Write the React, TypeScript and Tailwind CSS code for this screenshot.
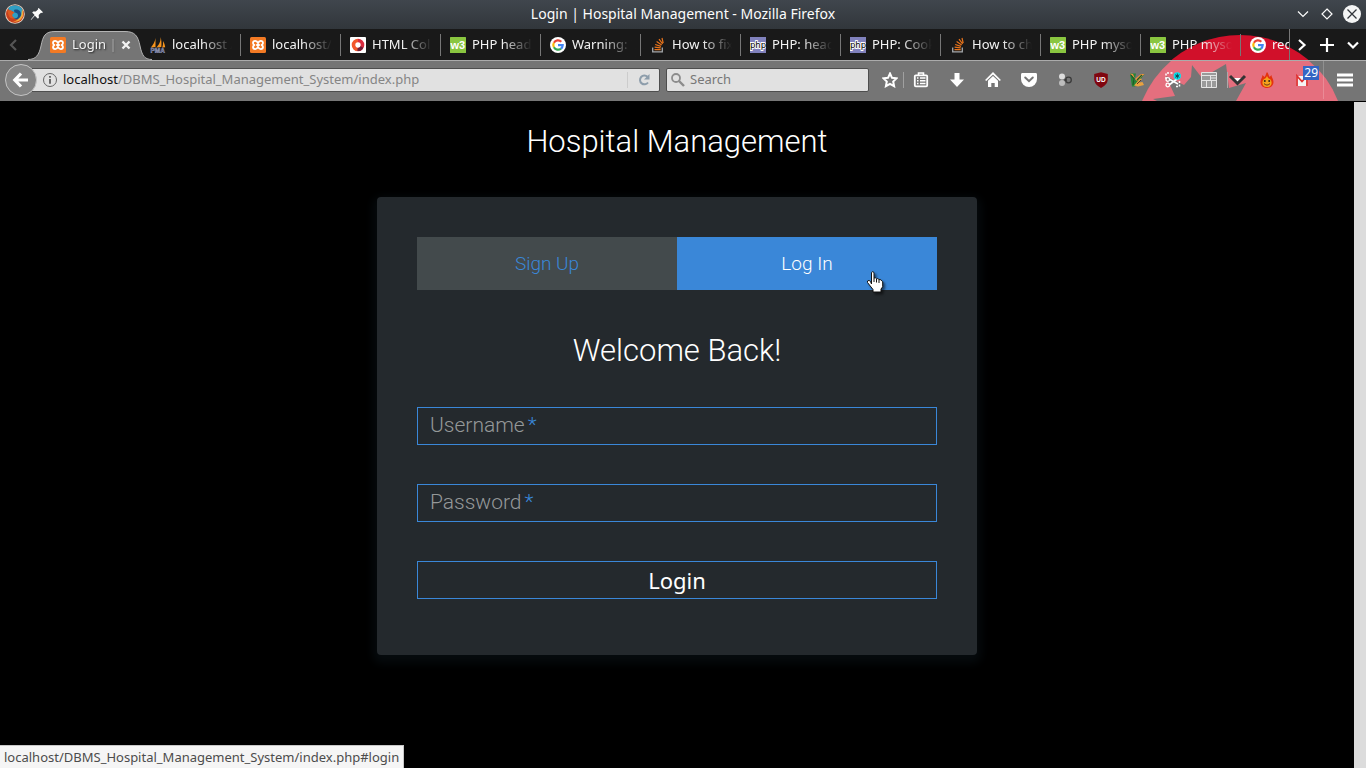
import { useState } from "react";
import type { ReactNode } from "react";

const icon16 = "block h-4 w-4 shrink-0";

function XamppIcon() {
  return (
    <svg className={icon16} viewBox="0 0 16 16" aria-hidden="true">
      <rect width="16" height="16" rx="1.5" fill="#f37a24" />
      <path
        d="M8 6.2C7.400 4.600 6.600 3.900 5.300 3.900 3.900 3.900 3 4.700 3 5.900 3 7 3.700 7.500 4.400 8 3.700 8.500 3 9 3 10.100c0 1.200.9 2 2.300 2 1.300 0 2.100-.7 2.700-2.300.6 1.600 1.400 2.300 2.700 2.300 1.400 0 2.300-.8 2.300-2 0-1.100-.7-1.600-1.400-2.100.7-.5 1.400-1 1.400-2.100 0-1.200-.9-2-2.300-2C9.400 3.900 8.600 4.600 8 6.200zM6.200 8h3.600"
        fill="none"
        stroke="#fff"
        strokeWidth="1.8"
        strokeLinejoin="round"
      />
    </svg>
  );
}

function PmaIcon() {
  return (
    <svg className={icon16} viewBox="0 0 16 16" aria-hidden="true">
      <path d="M5.500 1C5 5 3 8 .8 10.500L5.500 10zM10.500 0C11 4 9 8 6.300 10.500l5-.5c.4-4 .2-7-.8-10zM13 4c.2 2.500 0 4.500-.8 6.500l3-.2C15 8 14.200 6 13 4z" fill="#f7941d" />
      <text x="0.500" y="15.600" fontSize="6.500" fontWeight="700" fontFamily="Liberation Sans, sans-serif" fill="#3c4467" stroke="#aab0d0" strokeWidth=".4">PMA</text>
    </svg>
  );
}

function HtmlColorIcon() {
  return (
    <svg className={icon16} viewBox="0 0 16 16" aria-hidden="true">
      <rect width="16" height="16" rx="1" fill="#fff" />
      <path d="M8 3.500A4.500 4.500 0 0 0 8 12.500" fill="none" stroke="#f2572d" strokeWidth="3.600" />
      <path d="M8 3.500A4.500 4.500 0 0 1 8 12.500" fill="none" stroke="#d92b3f" strokeWidth="3.600" />
      <path d="M12 10A4.500 4.500 0 0 1 7.500 12.500" fill="none" stroke="#6d2039" strokeWidth="3" />
    </svg>
  );
}

function W3Icon() {
  return (
    <svg className={icon16} viewBox="0 0 16 16" aria-hidden="true">
      <rect width="16" height="16" rx=".5" fill="#8ac640" />
      <text x="0.500" y="12" fontSize="11" fontWeight="700" fontFamily="Liberation Sans, sans-serif" fill="#fff">w3</text>
    </svg>
  );
}

function GoogleIcon() {
  return (
    <svg className={icon16} viewBox="0 0 16 16" aria-hidden="true">
      <circle cx="8" cy="8" r="8" fill="#fff" />
      <g fill="none" strokeWidth="2.200">
        <path d="M11.300 4.700A4.700 4.700 0 0 0 3.900 5.700" stroke="#ea4335" />
        <path d="M3.900 5.700A4.700 4.700 0 0 0 3.900 10.300" stroke="#fbbc05" />
        <path d="M3.900 10.300A4.700 4.700 0 0 0 11 11.600" stroke="#34a853" />
        <path d="M11 11.600A4.700 4.700 0 0 0 12.700 8.200H8" stroke="#4285f4" />
      </g>
    </svg>
  );
}

function StackIcon() {
  return (
    <svg className={icon16} viewBox="0 0 16 16" aria-hidden="true">
      <path d="M2.700 10.500v4.300h9.600v-4.300" fill="none" stroke="#a5a8ab" strokeWidth="1.300" />
      <path d="M4.500 12.700h6.200M4.600 10.200l6.100.7M5.200 7.500l5.800 1.900M6.600 4.600l5.100 3.300M9 2.200l3.600 4.700M12 1l1.200 5.200" fill="none" stroke="#e8731b" strokeWidth="1.200" />
    </svg>
  );
}

function PhpIcon() {
  return (
    <svg className={icon16} viewBox="0 0 16 16" aria-hidden="true">
      <rect width="16" height="16" fill="#8182bd" />
      <text x="8" y="10.500" textAnchor="middle" fontSize="8.500" fontFamily="DejaVu Sans, sans-serif" fill="#000" stroke="#fff" strokeWidth="1.800" paintOrder="stroke">php</text>
    </svg>
  );
}

function FirefoxIcon() {
  return (
    <svg className="block h-5 w-5" viewBox="0 0 20 20" aria-hidden="true">
      <circle cx="10" cy="10" r="9.800" fill="#e9d6c4" />
      <circle cx="10" cy="10" r="9" fill="#c8401c" />
      <path d="M3 4.500C6 .6 13 .2 16.500 4c2.500 3 2.200 8-1 10.500C12 16 8 15 7 12 6.500 10 8 9 9.500 8.500L7 7 5 7z" fill="#2f9fc4" />
      <path d="M9 6c4-1.500 7.500 1 7 5s-4.500 5-7.500 3.500c3 .3 4.500-1 4.500-3C13 9 11 9 9.500 8.500z" fill="#1b4f83" />
      <path d="M17 5c1.800 3.500 1.800 7-.4 9.600-2 2.600-5.600 3.800-8.600 3 4-.6 7.500-3.600 8.500-7z" fill="#f5a93a" />
      <path d="M2 6l2 .5L6 6l1 1.500L9.500 8.500 7.500 10c-.8 2 .2 3.500 2.500 4-3 1.500-6-.5-6.500-3z" fill="#dd5a20" />
    </svg>
  );
}

function Chevron({ dir, color }: { dir: "left" | "right" | "down"; color: string }) {
  const d = { left: "M10 3 5 8l5 5", right: "M5 3l5.500 5L5 13", down: "M3 5.500l5 5 5-5" }[dir];
  return (
    <svg className={icon16} viewBox="0 0 16 16" aria-hidden="true">
      <path d={d} fill="none" stroke={color} strokeWidth="2.200" />
    </svg>
  );
}

const tabs: { title: string; icon: ReactNode }[] = [
  { title: "localhost /", icon: <PmaIcon /> },
  { title: "localhost/", icon: <XamppIcon /> },
  { title: "HTML Col", icon: <HtmlColorIcon /> },
  { title: "PHP head", icon: <W3Icon /> },
  { title: "Warning: '", icon: <GoogleIcon /> },
  { title: "How to fix", icon: <StackIcon /> },
  { title: "PHP: head", icon: <PhpIcon /> },
  { title: "PHP: Cook", icon: <PhpIcon /> },
  { title: "How to ch", icon: <StackIcon /> },
  { title: "PHP mysq", icon: <W3Icon /> },
  { title: "PHP mysq", icon: <W3Icon /> },
  { title: "rec", icon: <GoogleIcon /> },
];

function TitleBar() {
  return (
    <header className="grid h-[29px] grid-cols-[1fr_auto_1fr] items-center bg-linear-to-b from-[#40464d] to-[#31363b] px-[5px] pb-px text-[#fcfcfc]">
      <div className="flex items-center gap-2">
        <FirefoxIcon />
        <svg className="-ml-1 h-4 w-4" viewBox="0 0 16 16" aria-hidden="true">
          <path d="M9.700 2 14 6.300l-1 .6-1-.1-2.300 2.300.2 2.700-1 1-3-3L3 13l-1 .9-.2-.3L5.600 8.900 3.200 6.400l1-.9 2.600.1L9.200 3.300 9 2.600z" fill="#fcfcfc" />
        </svg>
      </div>
      <h1 className="text-sm">Login | Hospital Management - Mozilla Firefox</h1>
      <div className="flex items-center justify-end gap-2">
        <button aria-label="Minimize">
          <svg className="block h-4 w-4" viewBox="0 0 16 16"><path d="M3 5.500l5 5 5-5" fill="none" stroke="#fcfcfc" strokeWidth="1.200" /></svg>
        </button>
        <button aria-label="Restore">
          <svg className="block h-4 w-4" viewBox="0 0 16 16"><path d="M8 3l5 5-5 5-5-5z" fill="none" stroke="#fcfcfc" strokeWidth="1.200" /></svg>
        </button>
        <button aria-label="Close window">
          <svg className="block h-[18px] w-[18px]" viewBox="0 0 18 18"><circle cx="9" cy="9" r="9" fill="#f4f5f5" /><path d="M4.500 4.500l9 9m0-9l-9 9" stroke="#31363b" strokeWidth="1.300" /></svg>
        </button>
      </div>
    </header>
  );
}

function TabStrip() {
  return (
    <nav aria-label="Browser tabs" className="relative flex h-[31px] text-[13px] text-[#f3f3f3]">
      <button aria-label="Scroll tabs left" className="flex w-7 shrink-0 items-center justify-center"><Chevron dir="left" color="#555" /></button>
      <div className="flex min-w-0 flex-1 overflow-hidden pl-[13px]">
        <div className="relative w-[100px] shrink-0">
          <svg className="absolute top-[2px] left-[-13px] h-[29px] w-[124px]" viewBox="0 0 124 29" aria-hidden="true">
            <path d="M0 29C8 28.500 11 24 13 15 15 5 17 .5 27 .5H97C107 .5 110 5 112 15 114 24 116 28.500 124 29z" fill="#757575" />
            <path d="M0 28.500C8 28.500 11 24 13 15 15 5 17 .5 27 .5H97C107 .5 110 5 112 15 114 24 116 28.500 124 28.500" fill="none" stroke="#b4b4b4" />
          </svg>
          <div className="relative flex h-full items-center pr-[7px] pl-[9px]">
            <XamppIcon />
            <button className="ml-[6px] min-w-0 flex-1 whitespace-nowrap mask-r-from-70% text-left [text-shadow:1px_1px_2px_#222]">Login |</button>
            <button aria-label="Close tab">
              <svg className="block h-4 w-4" viewBox="0 0 16 16"><path d="M4.500 4.500l7 7m0-7l-7 7" stroke="#f2f2f2" strokeWidth="2.400" /></svg>
            </button>
          </div>
        </div>
        {tabs.map((tab, i) => (
          <div key={i} className="flex w-[100px] shrink-0 items-center">
            <button className="flex min-w-0 flex-1 items-center gap-[6px] pr-2 pl-[9px] text-left">
              {tab.icon}
              <span className="min-w-0 flex-1 whitespace-nowrap mask-r-from-50%">{tab.title}</span>
            </button>
            <span className="h-[22px] w-px bg-[#777]" />
          </div>
        ))}
      </div>
      <div className="flex shrink-0 items-center border-l border-[#777]">
        <button aria-label="Scroll tabs right" className="flex w-6 justify-center"><Chevron dir="right" color="#fff" /></button>
        <button aria-label="New tab" className="flex w-[26px] justify-center">
          <svg className={icon16} viewBox="0 0 16 16"><path d="M8 1v14M1 8h14" stroke="#fff" strokeWidth="2.200" /></svg>
        </button>
        <button aria-label="List all tabs" className="flex w-[26px] justify-center"><Chevron dir="down" color="#fff" /></button>
      </div>
    </nav>
  );
}

function ToolButton({ label, children }: { label: string; children: ReactNode }) {
  return (
    <button aria-label={label} className="relative flex h-8 w-9 shrink-0 items-center justify-center">
      {children}
    </button>
  );
}

function Toolbar() {
  return (
    <div className="relative flex h-[41px] items-center border-t border-[#ababab] pb-[2px] text-[13px]">
      <button aria-label="Back" className="relative z-10 ml-[5px] flex h-8 w-8 shrink-0 items-center justify-center rounded-full border border-[#c4c4c4] bg-[#858585]">
        <svg className="h-5 w-5" viewBox="0 0 20 20"><path d="M10 3.500 3.800 10l6.200 6.500M4.500 10H17" fill="none" stroke="#fff" strokeWidth="3.200" /></svg>
      </button>
      <form className="-ml-3 flex h-6 min-w-0 flex-1 items-center rounded-r-[2px] border border-[#4e4e4e] bg-[#e1e1e1] pl-4">
        <svg className="h-4 w-4 shrink-0" viewBox="0 0 16 16" aria-hidden="true">
          <circle cx="8" cy="8" r="6.500" fill="none" stroke="#666" />
          <path d="M8 7v4.800M8 4v1.800" stroke="#555" strokeWidth="1.700" />
        </svg>
        <label className="relative ml-[5px] min-w-0 flex-1 text-[#858585]">
          <span aria-hidden="true" className="block whitespace-nowrap"><span className="text-[#111]">localhost</span>/DBMS_Hospital_Management_System/index.php</span>
          <input aria-label="Address" defaultValue="" className="absolute inset-0 w-full bg-transparent outline-none" />
        </label>
        <button type="button" aria-label="Reload" className="flex h-4 w-8 items-center justify-center border-l border-[#ccc]">
          <svg className={icon16} viewBox="0 0 16 16"><path d="M11.500 4.800A4.400 4.400 0 1 0 12 10.500" fill="none" stroke="#8d9dab" strokeWidth="2" /><path d="M13.500 2v5.500H8z" fill="#8d9dab" /></svg>
        </button>
      </form>
      <label className="mr-2 ml-[6px] flex h-6 w-[203px] shrink-0 items-center gap-1 rounded-[2px] border border-[#4e4e4e] bg-[#e1e1e1] px-[3px]">
        <svg className={icon16} viewBox="0 0 16 16" aria-hidden="true"><circle cx="6" cy="6" r="4" fill="none" stroke="#8c8c8c" strokeWidth="1.800" /><path d="M9 9l5 5" stroke="#8c8c8c" strokeWidth="2.400" /></svg>
        <input aria-label="Search the web" placeholder="Search" className="min-w-0 flex-1 bg-transparent outline-none placeholder:text-[#777]" />
      </label>
      <button aria-label="Bookmark this page" className="flex w-[26px] shrink-0 justify-center">
        <svg className={icon16} viewBox="0 0 16 16"><path d="M8 1.500l2 4.300 4.600.5-3.400 3.200.9 4.700L8 11.900l-4.100 2.300.9-4.700L1.400 6.300 6 5.800z" fill="none" stroke="#fff" strokeWidth="2" /></svg>
      </button>
      <span className="-mr-px h-4 w-px shrink-0 bg-[#a0a0a0]" />
      <ToolButton label="Bookmarks">
        <svg className={icon16} viewBox="0 0 16 16"><path d="M5.500 3V1h5v2" fill="none" stroke="#fff" strokeWidth="1.600" /><rect x="1.800" y="3.300" width="12.400" height="11" rx="1" fill="none" stroke="#fff" strokeWidth="1.800" /><path d="M4 6h1.500M7 6h5.500M4 8.800h1.500M7 8.800h5.500M4 11.600h1.500M7 11.600h5.500" stroke="#fff" strokeWidth="1.500" /></svg>
      </ToolButton>
      <ToolButton label="Downloads">
        <svg className={icon16} viewBox="0 0 16 16"><path d="M5.500 1h5v6.500H15L8 15 1 7.500h4.500z" fill="#fff" /></svg>
      </ToolButton>
      <ToolButton label="Home">
        <svg className={icon16} viewBox="0 0 16 16"><path d="M.7 8.500 8 1.300l7.300 7.200" fill="none" stroke="#fff" strokeWidth="1.700" /><path d="M3 8.700 8 4l5 4.700V15H9.700v-4H6.300v4H3z" fill="#fff" /></svg>
      </ToolButton>
      <ToolButton label="Save to Pocket">
        <svg className={icon16} viewBox="0 0 16 16"><path d="M1.500 1h13C15.500 1 16 1.600 16 2.500V7A8 8 0 0 1 0 7V2.500C0 1.600.5 1 1.500 1z" fill="#fff" /><path d="M4.200 5.500 8 9.200l3.800-3.700" fill="none" stroke="#757575" strokeWidth="2" strokeLinecap="round" /></svg>
      </ToolButton>
      <ToolButton label="Connections">
        <svg className={icon16} viewBox="0 0 16 16"><circle cx="5" cy="4.500" r="3" fill="#ddd" /><circle cx="5" cy="11" r="3" fill="#bdbdbd" /><circle cx="11.500" cy="8" r="2.800" fill="#777" stroke="#3b3b3b" strokeWidth="1.300" /><path d="M7 8h3" stroke="#333" /></svg>
      </ToolButton>
      <ToolButton label="uBlock Origin">
        <svg className={icon16} viewBox="0 0 16 16"><path d="M8 .3 14.800 2v5.500C14.500 12 11 14.300 8 16 5 14.300 1.500 12 1.200 7.500V2z" fill="#800610" /><text x="8" y="10" textAnchor="middle" fontSize="6.500" fontWeight="700" fontFamily="Liberation Sans, sans-serif" fill="#fff">UD</text></svg>
      </ToolButton>
      <ToolButton label="Vim mode">
        <svg className={icon16} viewBox="0 0 16 16"><path d="M1 1.500h6L5.500 9 12 2h3.500L6 14.500H3z" fill="#258536" /><path d="M1 1.500l3 .5 2 5 6-5h3.500L8 9z" fill="#f4913d" /><path d="M5 13.500l6-7 2 .5-3 3.500 3.500-.5L15 13l-6 1.500z" fill="#e8a23f" /><path d="M2 3l3 4-1 6M8 8l5-5" fill="none" stroke="#1d5c28" strokeWidth="1.200" /><path d="M8 12l4-4" stroke="#5b3a20" /></svg>
      </ToolButton>
      <ToolButton label="Screenshot">
        <svg className={icon16} viewBox="0 0 16 16"><path d="M1 7V1h8M14.500 9v5.500H10" fill="none" stroke="#fff" strokeWidth="1.500" strokeDasharray="2 1.500" /><path d="M4 7l9 5M4 13l8-6" stroke="#fff" strokeWidth="1.600" /><circle cx="2.800" cy="7.500" r="1.800" fill="none" stroke="#fff" strokeWidth="1.300" /><circle cx="2.800" cy="13" r="1.800" fill="none" stroke="#fff" strokeWidth="1.300" /><circle cx="12.300" cy="4" r="3.700" fill="#07e3ef" /><path d="M12.300 1.500v5M10.200 2.800l4.200 2.500M10.200 5.300l4.200-2.500" stroke="#15424c" /></svg>
      </ToolButton>
      <ToolButton label="Page layout">
        <svg className={icon16} viewBox="0 0 16 16"><path d="M.5.500h15v15H.5z" fill="#9a9a9a" stroke="#e4e4e4" /><path d="M.5 3.500h15M9.500 3.500v5M.5 8.500h15M5.500 8.500v7M10.500 8.500v7M9.500 6h6" fill="none" stroke="#e4e4e4" /></svg>
      </ToolButton>
      <button aria-label="Layout options" className="flex w-[22px] shrink-0 items-center border-l border-[#aaa]">
        <svg className="h-4 w-5" viewBox="0 0 20 16"><path d="M4.500 6h10l-5 5.500z" fill="#fff" /><path d="M2 4l7.500 7.500L17 4" fill="none" stroke="#333" strokeWidth="3" /></svg>
      </button>
      <ToolButton label="Hot topics">
        <svg className={icon16} viewBox="0 0 16 16"><path d="M8 0c2 2 1.300 3.500 2.600 5l1.900-2c-.2 2 2 4 2 7 0 3.800-3 6-6.500 6s-6.500-2.200-6.500-6c0-3 2.200-5 1.800-7L5.600 5C7 3.500 6.500 2 8 0z" fill="#e4320f" /><path d="M8 4c1 2 1.600 2.500 3.500 3.500 2 2.500 1.500 7.500-3.500 7.500s-5.500-5-3.500-7.500C6.400 6.500 7 6 8 4z" fill="#f5a21c" /><circle cx="5.800" cy="9" r="1" fill="#35251d" /><circle cx="10.200" cy="9" r="1" fill="#35251d" /><path d="M5 11.500c2 2 4 2 6 0" fill="none" stroke="#5a281a" /></svg>
      </ToolButton>
      <ToolButton label="Mail, 29 unread">
        <svg className={icon16} viewBox="0 0 16 16"><path d="M1 4h12v10H1z" fill="#f4f4f4" /><path d="M2 14V4l5 5.500L12 4v10" fill="none" stroke="#df3030" strokeWidth="1.800" /></svg>
        <span className="absolute top-[2px] right-[2px] bg-[#3365c4] px-px text-xs leading-[14px] text-white">29</span>
      </ToolButton>
      <div className="ml-[2px] flex w-[43px] shrink-0 justify-center self-stretch border-l border-white/20">
        <button aria-label="Open menu">
          <svg className={icon16} viewBox="0 0 16 16"><path d="M0 3h16M0 8h16M0 13h16" stroke="#fff" strokeWidth="3" /></svg>
        </button>
      </div>
    </div>
  );
}

function ThemeArt() {
  return (
    <svg className="absolute top-0 right-0 h-[72px] w-[236px]" viewBox="1130 29 236 72" aria-hidden="true">
      <circle cx="1240" cy="141" r="106" fill="#d1102a" />
      <path d="M1130 60h236v41h-236z" fill="#757575" />
      <path d="M1172 60Q1152 77 1142 101h196Q1329 77 1308 60z" fill="#e56f7e" />
      <path d="M1153 99l22-3-9-20 18 9 7-8 1-12 10 13 24-14 3 24 17-5-10 18h-79z" fill="#757575" />
    </svg>
  );
}

function Field({ id, label, type }: { id: string; label: string; type: string }) {
  const [value, setValue] = useState("");
  return (
    <div className="relative">
      <input
        id={id}
        type={type}
        value={value}
        onChange={(e) => setValue(e.target.value)}
        className="block h-[38px] w-full border border-[#3a87d8] bg-transparent px-3 text-[21px] text-white outline-none"
      />
      {value === "" && (
        <label htmlFor={id} className="pointer-events-none absolute inset-y-0 left-[13px] flex items-center text-[21px] font-light text-[#959899]">
          {label}
          <span className="ml-[3px] text-[#3a87d8]">*</span>
        </label>
      )}
    </div>
  );
}

function LoginPage() {
  return (
    <main className="min-w-0 flex-1 px-4 pb-10 font-[Roboto,sans-serif] font-light text-white">
      <h2 className="pt-5 text-center text-[31px] leading-10">Hospital Management</h2>
      <section className="mx-auto mt-[35px] max-w-[600px] rounded bg-[#24292d] px-10 pt-10 pb-14 shadow-[0_4px_10px_4px_rgba(19,35,47,0.3)]">
        <nav className="grid grid-cols-2 text-[19px] leading-[53px]">
          <a href="#signup" className="bg-[#434a4c] text-center text-[#3a87d8]">Sign Up</a>
          <a href="#login" className="relative bg-[#3a87d8] text-center">
            Log In
            <svg className="absolute top-[33px] right-[52px] h-6 w-[19px] drop-shadow-[2px_2px_1px_rgba(0,0,0,0.5)]" viewBox="0 0 19 24" aria-hidden="true">
              <path d="M5.500 14V2.500Q6.800.8 8 2.500V8q1.500-.8 2.500.8 1.500-.8 2.500.8 2-.6 3 1.600l.7.6v5L15 19v3H7v-2.500L1.500 12.500V11Q3 9.500 4.500 11.500z" fill="#fff" stroke="#111" />
              <path d="M8 8v4M10.500 9v3.500M13 10v3" stroke="#111" fill="none" />
            </svg>
          </a>
        </nav>
        <h3 className="mt-[41px] mb-9 text-center text-[31px] leading-10">Welcome Back!</h3>
        <form className="flex flex-col gap-[39px]" onSubmit={(e) => e.preventDefault()}>
          <Field id="username" label="Username" type="text" />
          <Field id="password" label="Password" type="password" />
          <button className="h-[38px] border border-[#3a87d8] font-['Noto_Sans',sans-serif] text-[22px] leading-[34px] font-normal">Login</button>
        </form>
      </section>
    </main>
  );
}

export default function App() {
  return (
    <div className="relative flex min-h-screen flex-col bg-black font-['Noto_Sans',sans-serif]">
      <TitleBar />
      <div className="relative bg-linear-to-b from-[#191919] from-[31px] to-[#757575] to-[31px]">
        <ThemeArt />
        <TabStrip />
        <Toolbar />
      </div>
      <div className="flex flex-1 border-t border-black">
        <LoginPage />
        <div className="w-3 shrink-0 bg-[#dcdcdc]" />
      </div>
      <div role="status" className="absolute bottom-0 left-0 border-t border-r border-[#c8c8c8] bg-[#f5f5f5] px-1 text-[13px] leading-[22px] text-[#4c4c4c]">
        localhost/DBMS_Hospital_Management_System/index.php#login
      </div>
    </div>
  );
}
